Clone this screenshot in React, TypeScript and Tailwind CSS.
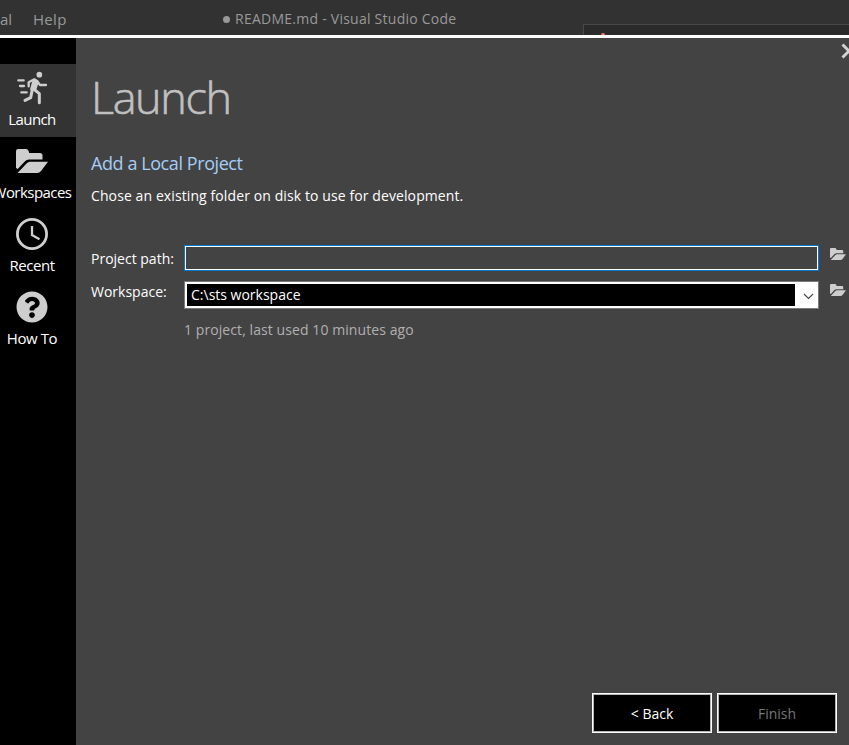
import type { ReactNode } from "react";
import { FaQuestionCircle } from "react-icons/fa";

function RunnerIcon() {
  return (
    <svg className="block h-8 w-8 overflow-visible" viewBox="48 36 96 96" fill="none" stroke="#cecece" strokeWidth="7" strokeLinecap="round" strokeLinejoin="round">
      <circle cx="118" cy="44" r="8.5" fill="#cecece" stroke="none" />
      <path d="M55 61H71M60 78H72M64 97H80" />
      <path d="M86 79V67L103 58L112 64L120 75H138" />
      <path d="M100 61L114 65L106 90L93 88Z" fill="#cecece" strokeWidth="5" />
      <path d="M97 88L92 113L75 121M101 87L118 101V128" strokeWidth="9" />
    </svg>
  );
}

function FolderIcon({ className }: { className: string }) {
  return (
    <svg className={className} viewBox="0 0 32 24" fill="#cecece" preserveAspectRatio="none">
      <path d="M0 19V2.2Q0 0 2.2 0H10Q12 0 12.6 2L13.2 4H24Q26.5 4 26.5 6.5V10.6H13Q10.5 10.6 9 12.2L1.7 20Z" />
      <path d="M1.5 24L10.8 14.2Q12 12.7 14 12.7H32L25 21.9Q23.5 24 21 24Z" />
    </svg>
  );
}

function ClockIcon() {
  return (
    <svg className="block h-8 w-8" viewBox="0 0 32 32" fill="none" stroke="#cecece">
      <circle cx="16" cy="16" r="14.6" strokeWidth="2.8" />
      <path d="M16 8V17L23.5 21.2" strokeWidth="2.3" />
    </svg>
  );
}

function NavItem({ label, active, children, tracking }: { label: string; active?: boolean; children: ReactNode; tracking: string }) {
  return (
    <div className={`flex h-[73px] w-[76px] flex-col pt-2 ${active ? "bg-[#333333]" : ""}`}>
      <div className="flex h-8 w-16 items-center justify-center">{children}</div>
      <div className="flex h-[30px] w-16 items-center justify-center">
        <span className={`whitespace-nowrap text-[15px] leading-5 text-white ${tracking}`}>{label}</span>
      </div>
    </div>
  );
}

export default function App() {
  return (
    <div className="flex h-[745px] w-[849px] flex-col overflow-hidden bg-[#434343] font-['Open_Sans','Noto_Sans',sans-serif] text-[14px] text-white">
      <header className="flex h-[35px] shrink-0 items-start bg-[#323232] text-[15px] leading-5 text-[#999999]">
        <span className="flex w-[33px] shrink-0 pt-[9px]"><span>al</span></span>
        <span className="w-[190px] shrink-0 pt-[9px] tracking-[0.3px]">Help</span>
        <span className="flex w-[360px] shrink-0 items-center pt-[9px]">
          <span className="mr-[5px] h-[7px] w-[7px] rounded-full bg-[#999999]" />
          <span className="whitespace-nowrap text-[14px] tracking-[0.25px]">README.md - Visual Studio Code</span>
        </span>
        <div className="mt-6 h-[11px] flex-1 border-l border-t border-[#484848] bg-[#2b2b2b] pl-[17px] pt-2">
          <div className="h-1 w-1 rounded-t-full bg-[#ff7770]" />
        </div>
      </header>
      <div className="h-[3px] shrink-0 bg-white" />
      <div className="flex min-h-0 flex-1">
        <nav className="w-[76px] shrink-0 bg-black pt-[26px]">
          <NavItem label="Launch" active tracking="tracking-[-0.6px]"><RunnerIcon /></NavItem>
          <NavItem label="Workspaces" tracking="tracking-[-0.55px]"><FolderIcon className="h-6 w-8" /></NavItem>
          <NavItem label="Recent" tracking="tracking-[-0.45px]"><ClockIcon /></NavItem>
          <NavItem label="How To" tracking="tracking-[-0.4px]"><FaQuestionCircle className="h-8 w-8 text-[#cecece]" /></NavItem>
        </nav>
        <main className="flex min-w-0 flex-1 flex-col pl-[15px]">
          <div className="flex h-[26px] justify-end overflow-hidden pt-[5px]">
            <svg className="-mr-2 h-4 w-4 shrink-0" viewBox="0 0 16 16" stroke="#d2d2d2" strokeWidth="3">
              <path d="M1.5 1.5L14.5 14.5M14.5 1.5L1.5 14.5" />
            </svg>
          </div>
          <h1 className="h-[65px] text-[45px] font-light leading-[65px] tracking-[-1.4px] text-[#c0c0c0] [-webkit-text-stroke:0.6px_#c0c0c0]">Launch</h1>
          <h2 className="mt-[22px] h-6 text-[18px] leading-6 tracking-[-0.42px] text-[#a5cdf5]">Add a Local Project</h2>
          <p className="mt-[11px] h-5 leading-5 tracking-[0.1px]">Chose an existing folder on disk to use for development.</p>
          <div className="mt-[39px] flex h-6 items-start">
            <label className="w-[93px] shrink-0 pt-1 leading-5">Project path:</label>
            <div className="h-[26px] w-[635px] shrink-0 border border-[#0078d7]">
              <div className="h-full border border-white" />
            </div>
            <FolderIcon className="ml-[11px] mt-[3px] h-3 w-4" />
          </div>
          <div className="mt-3 flex h-7 items-start">
            <label className="w-[93px] shrink-0 pt-px leading-5">Workspace:</label>
            <div className="flex h-[28px] w-[635px] shrink-0 border border-[#7a7a7a] bg-white p-0.5">
              <div className="flex flex-1 items-start bg-black pl-1"><span className="leading-[22px]">C:\sts workspace</span></div>
              <div className="flex w-[21px] items-center justify-center">
                <svg className="ml-1.5 mt-0.5 h-[7px] w-[11px]" viewBox="0 0 11 7" fill="none" stroke="#444444" strokeWidth="1.1"><path d="M1 1L5.5 5.5L10 1" /></svg>
              </div>
            </div>
            <FolderIcon className="ml-[11px] mt-[3px] h-3 w-4" />
          </div>
          <p className="ml-[93px] mt-[11px] h-5 leading-5 tracking-[0.08px] text-[#b0b0b0]">1 project, last used 10 minutes ago</p>
          <div className="mb-3 mr-3 mt-auto flex justify-end gap-[5px]">
            <button className="h-10 w-[120px] border border-white bg-black"><span className="flex h-full items-center justify-center border border-[#b5b5b5]">&lt; Back</span></button>
            <button className="h-10 w-[120px] border border-white bg-black text-[#777777]"><span className="flex h-full items-center justify-center border border-[#b5b5b5]">Finish</span></button>
          </div>
        </main>
      </div>
    </div>
  );
}
